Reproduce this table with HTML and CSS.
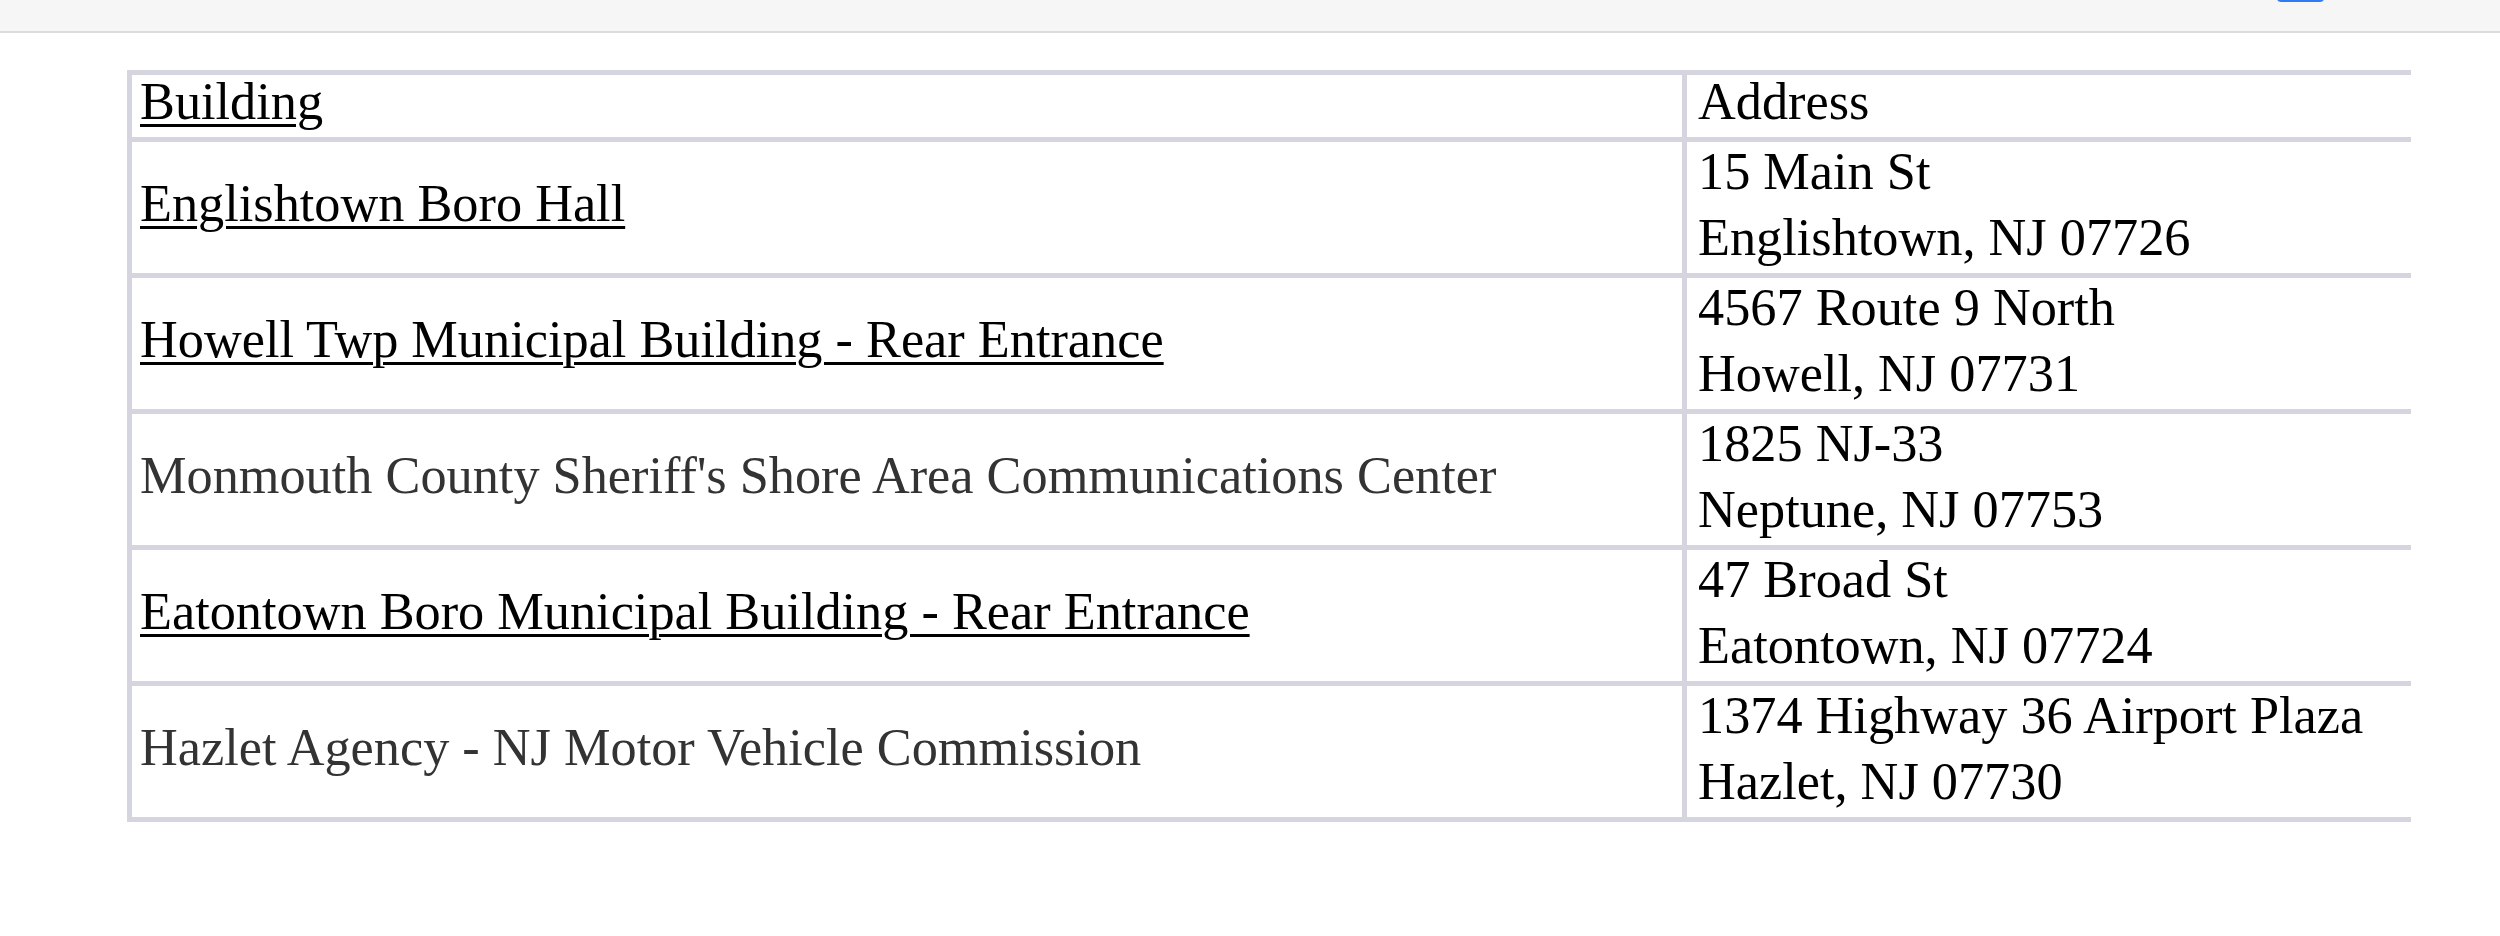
FILE: index.html
```html
<!DOCTYPE html>
<html lang="en">
<head>
<meta charset="utf-8">
<title>Polling Locations</title>
<link rel="stylesheet" href="styles.css">
</head>
<body>
<header class="topbar">
  <span class="topbar-tab"></span>
</header>
<main class="table-wrap">
  <table class="locations">
    <thead>
      <tr>
        <th class="col-building"><a href="#">Building</a></th>
        <th class="col-address address">Address</th>
      </tr>
    </thead>
    <tbody>
      <tr>
        <td class="building"><a href="#">Englishtown Boro Hall</a></td>
        <td class="address"><div class="cell-text">15 Main St<br>Englishtown, NJ 07726</div></td>
      </tr>
      <tr>
        <td class="building"><a href="#">Howell Twp Municipal Building - Rear Entrance</a></td>
        <td class="address"><div class="cell-text">4567 Route 9 North<br>Howell, NJ 07731</div></td>
      </tr>
      <tr>
        <td class="building plain">Monmouth County Sheriff's Shore Area Communications Center</td>
        <td class="address"><div class="cell-text">1825 NJ-33<br>Neptune, NJ 07753</div></td>
      </tr>
      <tr>
        <td class="building"><a href="#">Eatontown Boro Municipal Building - Rear Entrance</a></td>
        <td class="address"><div class="cell-text">47 Broad St<br>Eatontown, NJ 07724</div></td>
      </tr>
      <tr>
        <td class="building plain">Hazlet Agency - NJ Motor Vehicle Commission</td>
        <td class="address"><div class="cell-text">1374 Highway 36 Airport Plaza<br>Hazlet, NJ 07730</div></td>
      </tr>
    </tbody>
  </table>
</main>
</body>
</html>
```

FILE: styles.css
```css
html, body {
  margin: 0;
  padding: 0;
  background: #ffffff;
}

body {
  font-family: "Liberation Serif", "Times New Roman", serif;
  color: #000;
}

.topbar {
  position: relative;
  height: 31px;
  background: #f6f6f6;
  border-bottom: 2px solid #dcdcdc;
}

.topbar-tab {
  position: absolute;
  left: 2277px;
  top: -6px;
  width: 47px;
  height: 8px;
  border-radius: 4px;
  background: #2f7cf2;
}

.table-wrap {
  margin: 37px 0 0 127px;
  width: 2284px;
  overflow: hidden;
}

.locations {
  border-collapse: separate;
  border-spacing: 0;
  border-bottom: 5px solid #d5d5e0;
  font-size: 52.3px;
  table-layout: fixed;
  width: 2380px;
}

.locations th,
.locations td {
  border-top: 5px solid #d5d5e0;
  border-left: 5px solid #d5d5e0;
  padding: 0 8px;
  text-align: left;
  font-weight: normal;
  vertical-align: middle;
}

.col-building {
  width: 1534px;
}

.locations th {
  height: 52px;
  line-height: 52px;
  padding-bottom: 10px;
}

.locations td {
  line-height: 65.5px;
}

.locations .address {
  padding-left: 11px;
}

.cell-text {
  margin-top: -3px;
  margin-bottom: 3px;
}

.locations .building {
  padding-bottom: 8px;
}

.locations a {
  color: #000;
  text-decoration: underline;
  text-decoration-thickness: 3px;
  text-underline-offset: 5px;
}

.plain {
  color: #333;
}
```
